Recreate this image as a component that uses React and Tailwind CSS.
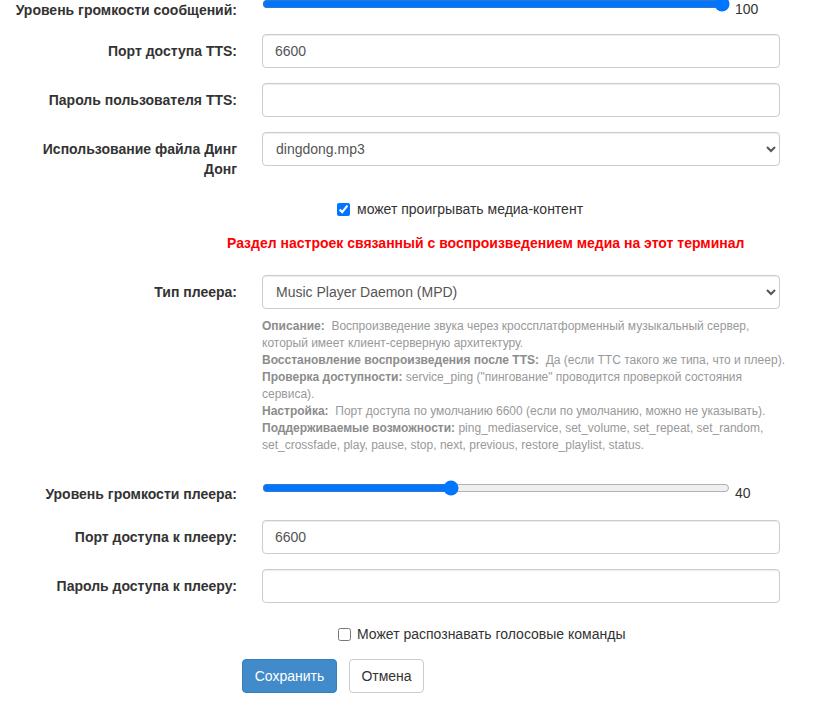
import React from "react";

function Label({ children, className = "" }) {
  return (
    <div className={"w-[237px] shrink-0 text-right font-bold pt-[7px] leading-[20px] text-[#333] " + className}>
      {children}
    </div>
  );
}

function TextInput({ value = "" }) {
  return (
    <input
      type="text"
      defaultValue={value}
      className="w-[518px] h-[34px] border border-[#ccc] rounded-[4px] px-[12px] text-[14px] text-[#555] bg-white shadow-[inset_0_1px_1px_rgba(0,0,0,0.075)] outline-none"
    />
  );
}

function Select({ value }) {
  return (
    <select
      defaultValue={value}
      className="w-[518px] h-[34px] border border-[#ccc] rounded-[4px] pl-[9px] pr-[8px] text-[14px] text-[#555] bg-white shadow-[inset_0_1px_1px_rgba(0,0,0,0.075)] outline-none appearance-auto"
    >
      <option value={value}>{value}</option>
    </select>
  );
}

function Range({ value, width }) {
  return (
    <div className="flex items-start pt-[3px]">
      <input
        type="range"
        min="0"
        max="100"
        defaultValue={value}
        className={"h-[16px] m-0 accent-[#0075ff] " + width}
      />
      <span className="mt-[5px] ml-[5px] leading-[16px] text-[14px] text-[#333]">{value}</span>
    </div>
  );
}

export default function App() {
  return (
    <div className="w-[833px] h-[719px] overflow-hidden bg-white font-['Liberation_Sans',Arial,sans-serif] text-[14px] text-[#333]">
      {/* message volume */}
      <div className="flex h-[34px] mt-[-7px]">
        <Label>Уровень громкости сообщений:</Label>
        <div className="ml-[25px]">
          <Range value={100} width="w-[468px]" />
        </div>
      </div>

      <div className="flex h-[34px] mt-[7px]">
        <Label>Порт доступа TTS:</Label>
        <div className="ml-[25px]">
          <TextInput value="6600" />
        </div>
      </div>

      <div className="flex h-[34px] mt-[15px]">
        <Label>Пароль пользователя TTS:</Label>
        <div className="ml-[25px]">
          <TextInput />
        </div>
      </div>

      <div className="flex h-[47px] mt-[15px]">
        <Label>
          Использование файла Динг
          <br />
          Донг
        </Label>
        <div className="ml-[25px]">
          <Select value="dingdong.mp3" />
        </div>
      </div>

      <div className="flex items-center h-[20px] mt-[20px] pl-[337px]">
        <input type="checkbox" defaultChecked className="w-[13px] h-[13px] m-0 accent-[#0075ff]" />
        <span className="ml-[7px] leading-[20px] text-[#333]">может проигрывать медиа-контент</span>
      </div>

      <div className="h-[20px] mt-[14px] pl-[227px] leading-[20px] font-bold text-[#ff0000]">
        Раздел настроек связанный с воспроизведением медиа на этот терминал
      </div>

      <div className="flex mt-[22px]">
        <Label>Тип плеера:</Label>
        <div className="ml-[25px] w-[518px]">
          <Select value="Music Player Daemon (MPD)" />
          <div className="mt-[9px] w-[530px] text-[12px] leading-[17px] text-[#999]">
            <b className="text-[#8c8c8c]">Описание:</b>&nbsp; Воспроизведение звука через кроссплатформенный музыкальный сервер, который имеет клиент-серверную архитектуру.
            <br />
            <b className="text-[#8c8c8c]">Восстановление воспроизведения после TTS:</b>&nbsp; Да (если ТТС такого же типа, что и плеер).
            <br />
            <b className="text-[#8c8c8c]">Проверка доступности:</b> service_ping ("пингование" проводится проверкой состояния сервиса).
            <br />
            <b className="text-[#8c8c8c]">Настройка:</b>&nbsp; Порт доступа по умолчанию 6600 (если по умолчанию, можно не указывать).
            <br />
            <b className="text-[#8c8c8c]">Поддерживаемые возможности:</b> ping_mediaservice, set_volume, set_repeat, set_random, set_crossfade, play, pause, stop, next, previous, restore_playlist, status.
          </div>
        </div>
      </div>

      <div className="flex h-[34px] mt-[23px]">
        <Label>Уровень громкости плеера:</Label>
        <div className="ml-[25px]">
          <Range value={40} width="w-[468px]" />
        </div>
      </div>

      <div className="flex h-[34px] mt-[9px]">
        <Label>Порт доступа к плееру:</Label>
        <div className="ml-[25px]">
          <TextInput value="6600" />
        </div>
      </div>

      <div className="flex h-[34px] mt-[15px]">
        <Label>Пароль доступа к плееру:</Label>
        <div className="ml-[25px]">
          <TextInput />
        </div>
      </div>

      <div className="flex items-center h-[20px] mt-[21px] pl-[338px]">
        <input type="checkbox" className="w-[13px] h-[13px] m-0" />
        <span className="ml-[6px] leading-[20px] text-[#333]">Может распознавать голосовые команды</span>
      </div>

      <div className="flex gap-[12px] mt-[15px] pl-[242px]">
        <button className="w-[95px] h-[34px] rounded-[4px] bg-[#428bca] border border-[#357ebd] text-white text-[14px]">
          Сохранить
        </button>
        <button className="w-[75px] h-[34px] rounded-[4px] bg-white border border-[#ccc] text-[#333] text-[14px]">
          Отмена
        </button>
      </div>
    </div>
  );
}
